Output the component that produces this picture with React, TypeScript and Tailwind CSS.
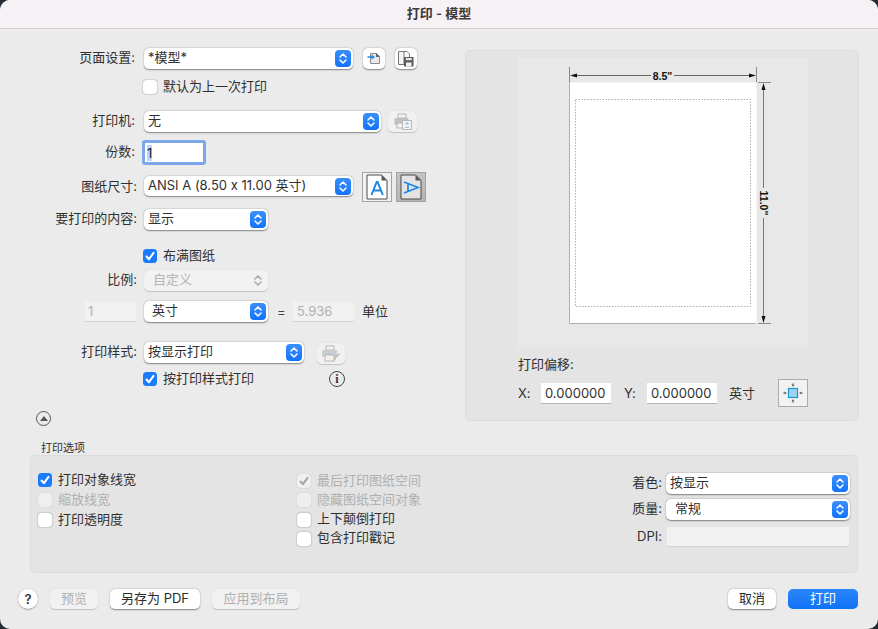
import type { ReactNode } from "react";

const Stepper = ({ disabled }: { disabled?: boolean }) => (
  <span
    className={
      disabled
        ? "w-[16px] h-[17px] rounded-[4px] flex items-center justify-center shrink-0 mr-[2px]"
        : "w-[16px] h-[17px] rounded-[4px] flex items-center justify-center shrink-0 mr-[2px] bg-gradient-to-b from-[#3a8ffd] to-[#0f73fa]"
    }
  >
    <svg width="10" height="13" viewBox="0 0 10 13" fill="none" stroke={disabled ? "#a8a8a8" : "#fff"} strokeWidth="1.5" strokeLinecap="round" strokeLinejoin="round">
      <path d="M2 5 L5 2 L8 5" />
      <path d="M2 8 L5 11 L8 8" />
    </svg>
  </span>
);

function Select({ width, text, pad, disabled }: { width: string; text: string; pad?: string; disabled?: boolean }) {
  return (
    <div
      className={`${width} h-[20.5px] rounded-[5px] flex items-center justify-between shrink-0 ${
        disabled
          ? "bg-[#f2f2f2] text-[#b4b4b4] shadow-[0_0.5px_1px_rgba(0,0,0,0.18)]"
          : "bg-white text-[#303030] shadow-[0_0.5px_1.5px_rgba(0,0,0,0.45)]"
      }`}
    >
      <span className={`${pad ?? "pl-[4px]"} pb-[3px] whitespace-nowrap`}>{text}</span>
      <Stepper disabled={disabled} />
    </div>
  );
}

function Checkbox({ checked, disabled, label }: { checked?: boolean; disabled?: boolean; label: string }) {
  const box = checked
    ? disabled
      ? "bg-[#f0f0f0] shadow-[0_0_1px_rgba(0,0,0,0.3)]"
      : "bg-[#1a7bfb]"
    : disabled
      ? "bg-[#efefef] shadow-[0_0_1px_rgba(0,0,0,0.25)]"
      : "bg-white shadow-[0_0_1.5px_rgba(0,0,0,0.5)]";
  return (
    <div className={`flex items-center h-[14px] gap-[6px] whitespace-nowrap ${disabled ? "text-[#b0b0b0]" : "text-[#303030]"}`}>
      <span className={`w-[14px] h-[14px] rounded-[3.5px] flex items-center justify-center shrink-0 ${box}`}>
        {checked && (
          <svg width="12" height="12" viewBox="0 0 12 12" fill="none" stroke={disabled ? "#a5a5a5" : "#fff"} strokeWidth="2" strokeLinecap="round" strokeLinejoin="round">
            <path d="M2.5 6.5 L5 9.2 L9.5 2.8" />
          </svg>
        )}
      </span>
      <span className="pb-[3px]">{label}</span>
    </div>
  );
}

function Row({ className, label, labelPad, children }: { className: string; label?: string; labelPad?: string; children: ReactNode }) {
  return (
    <div className={`flex items-center ${className}`}>
      <span className={`w-[137px] text-right shrink-0 text-[#303030] whitespace-nowrap pb-[3px] ${labelPad ?? ""}`}>{label}</span>
      <div className="ml-[7px] flex items-center">{children}</div>
    </div>
  );
}

const IconButton = ({ className, children }: { className: string; children: ReactNode }) => (
  <div className={`h-[21px] rounded-[5px] flex items-center justify-center shrink-0 ${className}`}>{children}</div>
);

const SheetIcon = () => (
  <svg width="14" height="13" viewBox="0 0 14 13" fill="none">
    <path d="M3.5 1.5 H9.5 L12.5 4.5 V11.5 H3.5 Z" fill="#e9e9e9" stroke="#8a8a8a" />
    <path d="M9 1 L13 5 H9 Z" fill="#666" />
    <path d="M0.5 5 H5.5" stroke="#1a86e8" strokeWidth="1.5" />
    <path d="M4.5 2.5 L8 5 L4.5 7.5 Z" fill="#1a86e8" />
  </svg>
);

const SaveIcon = () => (
  <svg width="16" height="16" viewBox="0 0 16 16" fill="none">
    <path d="M0.5 0.5 H6 V13.5 H0.5 Z" fill="#f4f4f4" stroke="#777" />
    <path d="M6 0.5 H9 L11.5 3 V6" stroke="#777" fill="none" />
    <rect x="6" y="6" width="9.5" height="9.5" rx="0.5" fill="#5a5a5a" />
    <rect x="7.8" y="7" width="6" height="2.2" fill="#e4e4e4" />
    <rect x="8" y="11.5" width="5.5" height="4" fill="#f0f0f0" />
  </svg>
);

const PrinterAddIcon = () => (
  <svg width="18" height="17" viewBox="0 0 18 17" fill="none" opacity="0.55">
    <rect x="4" y="1" width="8" height="4" fill="#f4f4f4" stroke="#8a8a8a" />
    <rect x="0.5" y="5" width="14" height="7" rx="1" fill="#9a9a9a" />
    <rect x="3" y="10" width="7" height="5" fill="#f4f4f4" stroke="#8a8a8a" />
    <rect x="8.5" y="7.5" width="9" height="9" fill="#f6f6f6" stroke="#7f8d99" />
    <path d="M11 10.5 H15 M13 8.8 V12.2 M11 14.5 H15" stroke="#6a9ac0" />
  </svg>
);

const PrinterBrushIcon = () => (
  <svg width="20" height="18" viewBox="0 0 20 18" fill="none" opacity="0.55">
    <rect x="5" y="1" width="8" height="4" fill="#f4f4f4" stroke="#8a8a8a" />
    <rect x="1" y="5" width="15" height="7" rx="1" fill="#b0b0b0" />
    <rect x="4" y="10" width="9" height="6" fill="#f4f4f4" stroke="#8a8a8a" />
    <path d="M6 9 H11" stroke="#5aa8e0" />
    <path d="M13 14 L18.5 8.5" stroke="#8a8a8a" strokeWidth="1.4" />
    <path d="M10.5 16.5 L14 13 L15 15 Z" fill="#c79a5a" />
  </svg>
);

const PortraitIcon = () => (
  <svg width="22" height="26" viewBox="0 0 22 26" fill="none">
    <path d="M1 1 H15.5 L21 6.5 V25 H1 Z" fill="#fff" stroke="#4a4a4a" />
    <path d="M15.5 1 L21 6.5 H15.5 Z" fill="#5a5a5a" />
    <path d="M5.5 21 L10.7 8 H11.6 L16.8 21 M7.4 16.5 H15" stroke="#1f86e6" strokeWidth="2" />
  </svg>
);

const LandscapeIcon = () => (
  <svg width="22" height="26" viewBox="0 0 22 26" fill="none">
    <path d="M1 1 H15.5 L21 6.5 V25 H1 Z" fill="#e3e3e3" stroke="#4a4a4a" />
    <path d="M15.5 1 L21 6.5 H15.5 Z" fill="#5a5a5a" />
    <path d="M4 8 L18 13.5 L4 19 M8 10 V17" stroke="#1f86e6" strokeWidth="1.7" />
  </svg>
);

const CenterIcon = () => (
  <svg width="24" height="24" viewBox="0 0 24 24" fill="none">
    <rect x="7.5" y="7.5" width="9" height="9" fill="#9fd3ee" stroke="#149ad8" strokeWidth="1.2" />
    <path d="M12 2 V5 M12 19 V22 M2 12 H5 M19 12 H22" stroke="#888" />
    <path d="M10.5 3.5 H13.5 L12 6 Z M10.5 20.5 H13.5 L12 18 Z M3.5 10.5 V13.5 L6 12 Z M20.5 10.5 V13.5 L18 12 Z" fill="#666" />
  </svg>
);

const PaperPreview = () => (
  <svg width="290" height="290" viewBox="0 0 290 290" className="block">
    <rect x="51.5" y="24.5" width="187" height="241" fill="#fff" />
    <path d="M51.5 24 V265.5 H238" stroke="#b0b0b0" fill="none" />
    <rect x="57.5" y="41.5" width="175" height="207" fill="none" stroke="#aeaeae" strokeDasharray="1.5 1.5" />
    <g fill="none">
      <path d="M51.5 9 V24 M238.5 9 V24" stroke="#8a8a8a" />
      <path d="M55 17.5 H133 M156 17.5 H235" stroke="#666" />
      <path d="M240 24.5 H253 M240 265.5 H253" stroke="#8a8a8a" />
      <path d="M245.5 28 V130 M245.5 160 V262" stroke="#777" />
    </g>
    <g fill="#111">
      <path d="M52 17.5 L59 15.5 V19.5 Z M238 17.5 L231 15.5 V19.5 Z" />
      <path d="M245.5 25 L243.5 32 H247.5 Z M245.5 265 L243.5 258 H247.5 Z" />
    </g>
    <text x="144.5" y="21.5" textAnchor="middle" fontSize="10.5" fontWeight="700" fill="#111" fontFamily="'Liberation Sans', sans-serif">8.5"</text>
    <text x="0" y="0" transform="translate(241.5 145) rotate(90)" textAnchor="middle" fontSize="10.5" fontWeight="700" fill="#111" fontFamily="'Liberation Sans', sans-serif">11.0"</text>
  </svg>
);

const Button = ({ className, children }: { className: string; children: ReactNode }) => (
  <div className={`h-[20px] rounded-[5px] flex items-center justify-center whitespace-nowrap shrink-0 pb-[3px] ${className}`}>{children}</div>
);

const off = "bg-[#f1f1f1] text-[#b0b0b0] shadow-[0_0.5px_1px_rgba(0,0,0,0.18)]";
const on = "bg-white text-[#2a2a2a] shadow-[0_0.5px_1.5px_rgba(0,0,0,0.45)]";

export default function App() {
  return (
    <div className="w-[878px] h-[629px] bg-[#232a33] overflow-hidden font-['Inter','Noto_Sans_CJK_SC',sans-serif] [font-feature-settings:'calt'_0] text-[13px] leading-[18px]">
      <div className="h-full rounded-[10px] overflow-hidden bg-[#ebebeb] flex flex-col">
        <div className="h-[29px] shrink-0 bg-[#f6f1f5] border-b border-[#cfcfcf] flex items-center justify-center font-semibold text-[13px] text-[#3a3a3a] pb-[2px]">
          打印 - 模型
        </div>

        <div className="flex h-[372px] shrink-0">
          <div className="w-[465px] shrink-0 flex flex-col">
            <Row className="mt-[19px] h-[21px]" label="页面设置:" labelPad="pr-[2px]">
              <Select width="w-[209px]" text="*模型*" />
              <IconButton className={`w-[22px] ml-[10px] ${on}`}><SheetIcon /></IconButton>
              <IconButton className={`w-[22px] ml-[10px] ${on}`}><SaveIcon /></IconButton>
            </Row>
            <div className="mt-[11px] ml-[143px]"><Checkbox label="默认为上一次打印" /></div>

            <Row className="mt-[17px] h-[21px]" label="打印机:" labelPad="pr-[2px]">
              <Select width="w-[237px]" text="无" />
              <IconButton className={`w-[29px] ml-[7px] ${off}`}><PrinterAddIcon /></IconButton>
            </Row>
            <Row className="mt-[8px] h-[25px]" label="份数:" labelPad="pr-[2px]">
              <div className="w-[64px] h-[25px] -ml-[2px] border-[3px] border-[#7ca7ea] rounded-[3px] bg-white flex items-center pl-[2px] shrink-0">
                <span className="bg-[#b3d7ff] text-[#222] leading-[16px]">1</span>
              </div>
            </Row>
            <Row className="mt-[7px] h-[30px]" label="图纸尺寸:">
              <div className="mb-[2px]"><Select width="w-[209px]" text="ANSI A (8.50 x 11.00 英寸)" /></div>
              <div className="w-[30px] h-[30px] ml-[9px] border border-[#a3a3a3] bg-[#f1f1f1] flex items-center justify-center shrink-0"><PortraitIcon /></div>
              <div className="w-[30px] h-[30px] ml-[4px] border border-[#a3a3a3] bg-gradient-to-b from-[#c4c4c4] to-[#b4b4b4] flex items-center justify-center shrink-0"><LandscapeIcon /></div>
            </Row>
            <Row className="mt-[7px] h-[21px]" label="要打印的内容:">
              <Select width="w-[124px]" text="显示" />
            </Row>
            <div className="mt-[19px] ml-[143px]"><Checkbox checked label="布满图纸" /></div>
            <Row className="mt-[7px] h-[21px]" label="比例:">
              <Select width="w-[124px]" text="自定义" pad="pl-[9px]" disabled />
            </Row>
            <div className="mt-[10px] h-[21px] flex items-center">
              <div className="ml-[85px] w-[51px] h-[20px] bg-[#f1f1f1] border-b border-[#d4d4d4] text-[#b0b0b0] pl-[3px] shrink-0 flex items-center">1</div>
              <div className="ml-[8px]"><Select width="w-[124px]" text="英寸" pad="pl-[8px]" /></div>
              <span className="ml-[9px] w-[16px] text-[#444]">=</span>
              <div className="w-[61px] h-[20px] bg-[#f1f1f1] border-b border-[#d4d4d4] text-[#b0b0b0] pl-[4px] shrink-0 flex items-center">5.936</div>
              <span className="ml-[8px] text-[#303030] pb-[2px]">单位</span>
            </div>
            <Row className="mt-[20px] h-[21px]" label="打印样式:">
              <Select width="w-[160px]" text="按显示打印" />
              <IconButton className={`w-[28px] ml-[13px] mt-[2px] ${off}`}><PrinterBrushIcon /></IconButton>
            </Row>
            <div className="mt-[8px] ml-[143px] w-[202px] flex items-center justify-between">
              <Checkbox checked label="按打印样式打印" />
              <span className="w-[16px] h-[16px] rounded-full border border-[#444] flex items-center justify-center font-['Liberation_Serif',serif] font-bold text-[12px] text-[#333] leading-none shrink-0">i</span>
            </div>
          </div>

          <div className="mt-[21px] w-[394px] h-[371px] shrink-0 rounded-[5px] bg-[#e4e4e4] border border-[#dcdcdc] pt-[7px]">
            <div className="ml-[52px] w-[290px] h-[290px] bg-[#e8e8e8]"><PaperPreview /></div>
            <div className="ml-[52px] mt-[7px] h-[18px] text-[#303030]">打印偏移:</div>
            <div className="ml-[52px] mt-[6px] h-[28px] flex items-center text-[#303030]">
              <span className="w-[23px]">X:</span>
              <div className="w-[70px] h-[21px] bg-white border-b border-[#b5b5b5] pl-[4px] shrink-0 flex items-center">0.000000</div>
              <span className="ml-[13px] w-[23px]">Y:</span>
              <div className="w-[70px] h-[21px] bg-white border-b border-[#b5b5b5] pl-[4px] shrink-0 flex items-center">0.000000</div>
              <span className="ml-[12px] w-[49px]">英寸</span>
              <div className="w-[30px] h-[28px] border border-[#ababab] bg-[#f2f2f2] flex items-center justify-center shrink-0"><CenterIcon /></div>
            </div>
          </div>
        </div>

        <div className="ml-[36px] mt-[10px] w-[15px] h-[15px] rounded-full border border-[#555] flex items-center justify-center shrink-0">
          <span className="w-0 h-0 border-l-[4px] border-r-[4px] border-b-[5px] border-l-transparent border-r-transparent border-b-[#555]" />
        </div>

        <div className="ml-[41px] mt-[14px] h-[15px] text-[11px] leading-[16px] text-[#303030]">打印选项</div>
        <div className="ml-[30px] w-[828px] h-[118px] rounded-[5px] bg-[#e4e4e4] border border-[#dcdcdc] flex shrink-0">
          <div className="ml-[7px] w-[259px] pt-[17px] flex flex-col gap-[6px] shrink-0">
            <Checkbox checked label="打印对象线宽" />
            <Checkbox disabled label="缩放线宽" />
            <Checkbox label="打印透明度" />
          </div>
          <div className="w-[325px] pt-[18px] flex flex-col gap-[5.3px] shrink-0">
            <Checkbox checked disabled label="最后打印图纸空间" />
            <Checkbox disabled label="隐藏图纸空间对象" />
            <Checkbox label="上下颠倒打印" />
            <Checkbox label="包含打印戳记" />
          </div>
          <div className="pt-[17px] flex flex-col shrink-0">
            <div className="flex items-center h-[21px]">
              <span className="w-[40px] text-right text-[#303030] pb-[3px]">着色:</span>
              <div className="ml-[4px]"><Select width="w-[184px]" text="按显示" /></div>
            </div>
            <div className="flex items-center h-[21px] mt-[5px]">
              <span className="w-[40px] text-right text-[#303030] pb-[3px]">质量:</span>
              <div className="ml-[4px]"><Select width="w-[184px]" text="常规" pad="pl-[9px]" /></div>
            </div>
            <div className="flex items-center h-[21px] mt-[6px]">
              <span className="w-[40px] text-right text-[#303030] pb-[1px]">DPI:</span>
              <div className="ml-[5px] w-[182px] h-[20px] bg-[#f1f1f1] border-b border-[#d4d4d4]" />
            </div>
          </div>
        </div>

        <div className="ml-[18px] mr-[20px] mt-[16px] flex items-center">
          <div className="w-[20px] h-[20px] rounded-full bg-white shadow-[0_0.5px_1.5px_rgba(0,0,0,0.45)] flex items-center justify-center font-semibold text-[#333] shrink-0">?</div>
          <Button className={`ml-[12px] w-[48px] ${off}`}>预览</Button>
          <Button className={`ml-[12px] w-[90px] ${on}`}>另存为 PDF</Button>
          <Button className={`ml-[12px] w-[88px] ${off}`}>应用到布局</Button>
          <Button className={`ml-auto w-[48px] ${on}`}>取消</Button>
          <Button className="ml-[12px] w-[70px] bg-gradient-to-b from-[#2a86fb] to-[#0f72f5] text-white">打印</Button>
        </div>
      </div>
    </div>
  );
}
